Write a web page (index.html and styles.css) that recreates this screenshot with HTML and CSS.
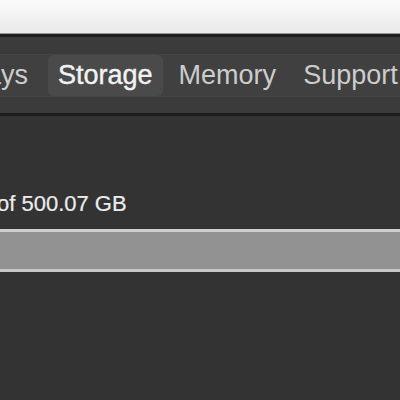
FILE: index.html
```
<!DOCTYPE html>
<html lang="en">
<head>
    <meta charset="UTF-8">
    <title>About This Mac - Storage</title>
    <link rel="stylesheet" href="styles.css">
</head>
<body>
    <div class="desk"></div>
    <div class="window">
        <div class="toolbar">
            <div class="tabs">
                <a href="javascript:;" class="tab">Displays</a>
                <a href="javascript:;" class="tab active">Storage</a>
                <a href="javascript:;" class="tab">Memory</a>
                <span class="sep"></span>
                <a href="javascript:;" class="tab">Support</a>
            </div>
        </div>
        <div class="content">
            <p class="usage">of 500.07 GB</p>
            <div class="bar"></div>
        </div>
    </div>
</body>
</html>
```
FILE: styles.css
```
*{
    padding: 0;
    margin: 0;
    box-sizing: border-box;
}
body{
    width: 400px;
    height: 400px;
    overflow: hidden;
    background-color: #333;
    font-family: "Liberation Sans", Arial, sans-serif;
}
.desk{
    height: 34px;
    background: linear-gradient(#fbfbfb, #e9e9e9);
    border-bottom: 1px solid #9a9a9a;
}
.toolbar{
    height: 82px;
    padding-top: 17px;
    background-color: #3b3b3b;
    border-top: 3px solid #1f1f1f;
    border-bottom: 3px solid #1d1d1d;
}
.tabs{
    display: flex;
    align-items: center;
    height: 43px;
    margin-left: -82px;
    background-color: #404040;
    border-top: 1px solid #454545;
    border-bottom: 1px solid #474747;
}
.tab{
    display: block;
    padding: 0 8px;
    height: 41px;
    line-height: 40px;
    font-size: 27px;
    color: #cdcdcd;
    text-decoration: none;
    white-space: nowrap;
}
.tab.active{
    margin-left: 12px;
    padding: 0 10px;
    color: #f2f2f2;
    -webkit-text-stroke: 0.4px #f2f2f2;
    background-color: #4a4a4a;
    border-radius: 6px;
}
.tab.active + .tab{
    margin-left: 8px;
}
.sep{
    width: 2px;
    height: 26px;
    margin: 0 3px 0 8px;
    background-color: #4e4e4e;
}
.content{
    padding-top: 76px;
}
.usage{
    margin-left: -3px;
    font-size: 22px;
    line-height: 24px;
    color: #ececec;
    -webkit-text-stroke: 0.2px #ececec;
}
.bar{
    margin-top: 13px;
    height: 43px;
    background-color: #929292;
    border-top: 3px solid #cfcfcf;
    border-bottom: 3px solid #c8c8c8;
}
```
